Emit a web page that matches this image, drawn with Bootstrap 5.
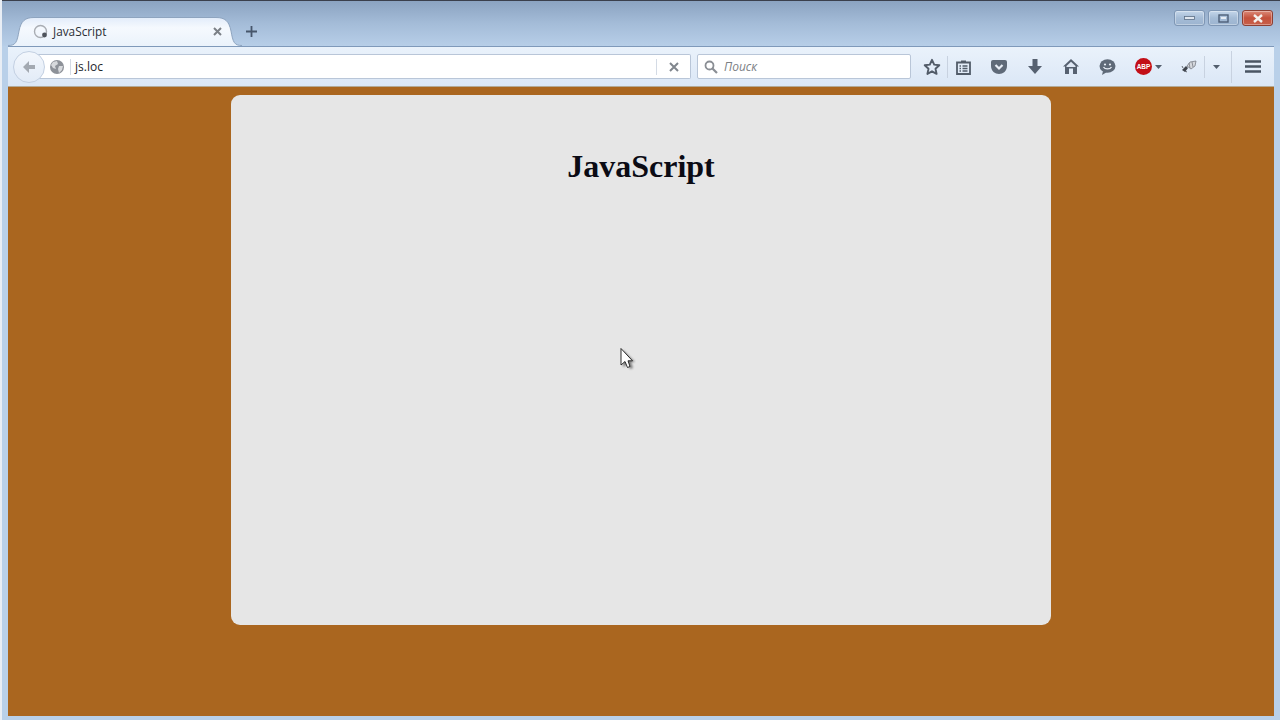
<!DOCTYPE html>
<html lang="ru">
<head>
<meta charset="utf-8">
<title>JavaScript</title>
<link href="https://cdn.jsdelivr.net/npm/bootstrap@5.3.0/dist/css/bootstrap.min.css" rel="stylesheet">
<style>
html,body{margin:0;height:720px;overflow:hidden}
body{background:#b9d0e9;font-family:"Open Sans","Noto Sans",sans-serif}
.fx-window{height:720px;border-left:2px solid #e9eef5;position:relative;overflow:hidden}
.fx-title{height:46px;background:linear-gradient(180deg,#8ba3c1 0,#a4bcd8 50%,#b7cee8 100%);border-top:1px solid #3a3f4c;padding-left:20px;flex:none}
.fx-tab{position:relative;width:211px;height:29px;margin-top:16px;padding:0 11px 0 11px;font-size:11.8px;color:#2b2f36;flex:none}
.fx-tabshape{position:absolute;left:-14px;top:0;width:234px;height:29px}
.fx-tab>span,.fx-tab>svg.fx-ico{position:relative}
.fx-tabtext{margin-left:5px;flex:1}
.fx-plus{margin:16px 0 0 10px;width:16px;height:29px}
.fx-winbtns{margin:9px 7px 0 0;gap:3px}
.fx-wb{height:16px;width:31px;border:1px solid #7e96b4;border-radius:3px;background:linear-gradient(180deg,#c4d6ea,#a5bcd6 50%,#9cb4d0);box-shadow:inset 0 0 0 1px rgba(255,255,255,.35)}
.fx-wbclose{background:linear-gradient(180deg,#dc8a78,#c4513c 50%,#c8604a);border-color:#8d3f33;width:31px}
.fx-tool{height:41px;background:linear-gradient(180deg,#eaf2fb,#dbe7f6);border-top:1px solid #7f99ba;border-bottom:1px solid #b3aa97;padding-left:5px;margin:0 6px;flex:none}
.fx-back{width:32px;height:32px;border-radius:50%;background:linear-gradient(180deg,#f3f7fc,#e2ebf7);border:1px solid #c3d0e2;flex:none;z-index:2;position:relative}
.fx-url{width:654px;height:25px;margin-left:-8px;background:#fff;border:1px solid #b9c6d8;border-left:0;border-radius:0 2px 2px 0;padding-left:13px;font-size:12px;color:#22262c;flex:none}
.fx-sep{width:1px;height:16px;background:#d4dbe5}
.fx-sep-first{margin-left:6px}
.fx-urltext{margin-left:4px;flex:1}
.fx-urlx{width:33px}
.fx-search{width:214px;height:25px;margin-left:6px;background:#fff;border:1px solid #b9c6d8;border-radius:2px;padding-left:6px;font-size:12px;font-style:italic;color:#7c7f85;flex:none}
.fx-search span{margin-left:6px}
.fx-icons{margin-left:12px}
.fx-star{margin-right:6px}
.fx-slot{flex:none;display:flex;align-items:center;justify-content:center}
.fx-w30{width:30px}
.fx-w42{width:42px}
.fx-w52{width:52px;gap:3px}
.fx-wasp{width:30px;margin-left:0}
.fx-caret{width:22px}
.fx-toolsep{width:1px;height:22px;background:#c8d2e0;flex:none}
.fx-toolsep-tall{height:32px;margin-left:4px}
.fx-page{flex:1;background:#aa661f;margin:0 6px 4px 6px;padding-top:8px;min-height:0}
.fx-sheet{width:820px;height:530px;margin:0 auto;background:#e6e6e6;border-radius:9px;padding-top:48px}
.fx-head{font-family:"Liberation Serif",serif;font-weight:700;font-size:32px;line-height:46px;color:#0b0b14;text-align:center;margin:0}
.fx-cursor{position:absolute;left:616px;top:347px;width:18px;height:24px}
</style>
</head>
<body>
<div class="fx-window d-flex flex-column">
  <div class="fx-title d-flex align-items-start">
    <div class="fx-tab d-flex align-items-center">
      <svg class="fx-tabshape" viewBox="0 0 234 29"><path d="M0 28.500C8 28.500 9 25 11 14C13 4 17 .5 26 .5H208C217 .5 221 4 223 14C225 25 226 28.500 234 28.500V30H0Z" fill="url(#tg)" stroke="#8ea4bf"/><defs><linearGradient id="tg" x1="0" y1="0" x2="0" y2="1"><stop offset="0" stop-color="#e2ecfa"/><stop offset=".35" stop-color="#f5f9fe"/><stop offset="1" stop-color="#eaf2fb"/></linearGradient></defs></svg>
      <svg class="fx-ico" width="15" height="15" viewBox="0 0 15 15"><circle cx="7.500" cy="7.500" r="6" fill="none" stroke="#a9adb3" stroke-width="1.400"/><circle cx="11.500" cy="11" r="2.400" fill="#4f545c"/></svg>
      <span class="fx-tabtext">JavaScript</span>
      <svg class="fx-ico" width="9" height="9" viewBox="0 0 9 9"><path d="M1 1L8 8M8 1L1 8" stroke="#7b8087" stroke-width="2"/></svg>
    </div>
    <div class="fx-plus d-flex align-items-center justify-content-center"><svg width="11" height="11" viewBox="0 0 11 11"><path d="M5.500 0V11M0 5.500H11" stroke="#47566b" stroke-width="1.800"/></svg></div>
    <div class="fx-winbtns d-flex ms-auto">
      <div class="fx-wb d-flex align-items-center justify-content-center"><svg width="11" height="5" viewBox="0 0 11 5"><rect x=".5" y=".5" width="10" height="3" fill="#dfe6ef" stroke="#5d6f86" stroke-width=".8"/></svg></div>
      <div class="fx-wb d-flex align-items-center justify-content-center"><svg width="11" height="9" viewBox="0 0 11 9"><rect x="1" y="1" width="9" height="7" fill="none" stroke="#4d5f78" stroke-width="1.400"/><rect x="3" y="3" width="5" height="2" fill="#e5ebf3"/></svg></div>
      <div class="fx-wb fx-wbclose d-flex align-items-center justify-content-center"><svg width="12" height="9" viewBox="0 0 12 9"><path d="M2 1L10 8M10 1L2 8" stroke="#f4f1ee" stroke-width="2.400"/></svg></div>
    </div>
  </div>
  <div class="fx-tool d-flex align-items-center">
    <div class="fx-back d-flex align-items-center justify-content-center"><svg width="14" height="14" viewBox="0 0 14 14"><path d="M7 1L1 7L7 13V9H13V5H7Z" fill="#a3a9b1"/></svg></div>
    <div class="fx-url d-flex align-items-center">
      <svg width="14" height="14" viewBox="0 0 14 14"><circle cx="7" cy="7" r="7" fill="#8d9198"/><path d="M3 2L7 1L8 4L5 6L6 9L3 8L1 5ZM9 6L13 6L12 10L9 13L8 9Z" fill="#d7d9dc"/></svg>
      <span class="fx-sep fx-sep-first"></span>
      <span class="fx-urltext">js.loc</span>
      <span class="fx-sep"></span>
      <span class="fx-urlx d-flex align-items-center justify-content-center"><svg width="10" height="10" viewBox="0 0 10 10"><path d="M1 1L9 9M9 1L1 9" stroke="#80868d" stroke-width="2"/></svg></span>
    </div>
    <div class="fx-search d-flex align-items-center">
      <svg width="14" height="14" viewBox="0 0 14 14"><circle cx="5.500" cy="5.500" r="4" fill="none" stroke="#8a8e94" stroke-width="1.800"/><path d="M8.500 8.500L13 13" stroke="#8a8e94" stroke-width="2.200"/></svg>
      <span>Поиск</span>
    </div>
    <div class="fx-icons d-flex align-items-center">
      <svg class="fx-star" width="18" height="18" viewBox="0 0 18 18"><path d="M9 1.800L11.200 6.600L16.300 7.200L12.500 10.700L13.600 15.900L9 13.300L4.400 15.900L5.500 10.700L1.700 7.200L6.800 6.600Z" fill="none" stroke="#525c69" stroke-width="1.900" stroke-linejoin="round"/></svg>
      <span class="fx-toolsep"></span>
      <span class="fx-slot fx-w30"><svg width="15" height="16" viewBox="0 0 15 16"><path d="M1 3.500H14V15H1Z" fill="none" stroke="#525c69" stroke-width="1.800"/><path d="M5 1.500H10V4H5Z" fill="#525c69"/><path d="M3.500 7H5M6.500 7H11.500M3.500 9.500H5M6.500 9.500H11.500M3.500 12H5M6.500 12H11.500" stroke="#525c69" stroke-width="1.300"/></svg></span>
      <span class="fx-slot fx-w42"><svg width="16" height="14" viewBox="0 0 16 14"><path d="M0 2Q0 0 2 0H14Q16 0 16 2V6C16 11 12 14 8 14C4 14 0 11 0 6Z" fill="#5f6a78"/><path d="M4.500 5L8 8.500L11.500 5" fill="none" stroke="#e8eef6" stroke-width="2.200"/></svg></span>
      <span class="fx-slot fx-w30"><svg width="14" height="15" viewBox="0 0 14 15"><path d="M4.500 0H9.500V7H14L7 15L0 7H4.500Z" fill="#566170"/></svg></span>
      <span class="fx-slot fx-w42"><svg width="16" height="15" viewBox="0 0 16 15"><path d="M8 0L16 7.500H14V15H10V9.500H6V15H2V7.500H0Z" fill="#566170"/><path d="M8 2.800L12.500 7V8H3.500V7Z" fill="#dfe8f4"/></svg></span>
      <span class="fx-slot fx-w30"><svg width="17" height="16" viewBox="0 0 17 16"><ellipse cx="8.500" cy="7" rx="8" ry="6.800" fill="#5f6a78"/><path d="M4 12L3 16L8 13Z" fill="#5f6a78"/><circle cx="6" cy="5.500" r="1.100" fill="#e8eef6"/><circle cx="11" cy="5.500" r="1.100" fill="#e8eef6"/><path d="M4.500 8C6 10.500 11 10.500 12.500 8" fill="none" stroke="#e8eef6" stroke-width="1.300"/></svg></span>
      <span class="fx-slot fx-w52"><svg width="17" height="17" viewBox="0 0 17 17"><circle cx="8.500" cy="8.500" r="8.500" fill="#c30f17"/><text x="8.500" y="11" font-family="Liberation Sans,sans-serif" font-size="6.500" font-weight="700" fill="#fff" text-anchor="middle">ABP</text></svg><svg width="7" height="4" viewBox="0 0 7 4"><path d="M0 0H7L3.500 4Z" fill="#525e6d"/></svg></span>
      <span class="fx-slot fx-wasp"><svg width="16" height="13" viewBox="0 0 16 13"><path d="M1 10L5 6L7 8L4 12Z" fill="#3f444c"/><path d="M6 6L9 2L15 1L14 6L10 9Z" fill="#d5d8dd" stroke="#6b7079" stroke-width=".7"/><path d="M8 3L9 8M11 2L12 7" stroke="#6b7079" stroke-width=".7"/><path d="M2 8L1 6M4 11L6 12" stroke="#3f444c" stroke-width=".8"/></svg></span>
      <span class="fx-toolsep"></span>
      <span class="fx-slot fx-caret"><svg width="7" height="4" viewBox="0 0 7 4"><path d="M0 0H7L3.500 4Z" fill="#525e6d"/></svg></span>
      <span class="fx-toolsep fx-toolsep-tall"></span>
      <span class="fx-slot fx-w42"><svg width="16" height="13" viewBox="0 0 16 13"><path d="M0 1.500H16M0 6.500H16M0 11.500H16" stroke="#4a5563" stroke-width="2.400"/></svg></span>
    </div>
  </div>
  <div class="fx-page">
    <div class="fx-sheet"><h1 class="fx-head">JavaScript</h1></div>
  </div>
  <svg class="fx-cursor" viewBox="0 0 18 24"><defs><filter id="cs"><feGaussianBlur stdDeviation="1.200"/></filter></defs><path d="M3 2L15 14H11L13 20L10 21L8 16L3 19Z" fill="#000" opacity=".45" filter="url(#cs)" transform="translate(2 1)"/><path d="M3 1.500V18L7 14.500L9.500 20.500L12 19.500L10 13.800H14.500Z" fill="#fff" stroke="#1a1a1a" stroke-width=".9"/></svg>
</div>
</body>
</html>
